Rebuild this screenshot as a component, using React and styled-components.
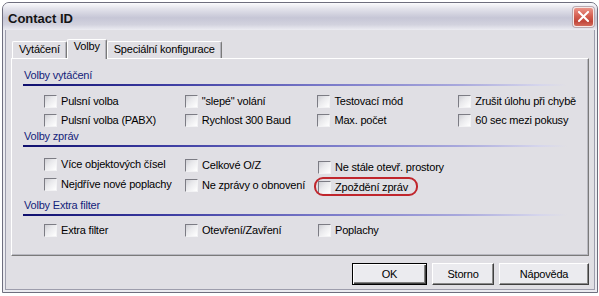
import styled, { createGlobalStyle } from "styled-components";

const GlobalStyle = createGlobalStyle`
  html, body {
    margin: 0;
    padding: 0;
    background: #ffffff;
  }
  body {
    font-family: "Liberation Sans", Arial, sans-serif;
    font-size: 11px;
    letter-spacing: -0.2px;
    color: #000;
  }
`;

const Window = styled.div`
  margin: 2px 0 0 2px;
  width: 596px;
  box-sizing: border-box;
  border: 1px solid #6e6e7e;
  border-radius: 7px 7px 0 0;
  overflow: hidden;
  background: #e0dfe4;
`;

const TitleBar = styled.div`
  height: 27px;
  display: flex;
  align-items: center;
  justify-content: space-between;
  padding: 0 3px 0 5px;
  background: linear-gradient(#fbfbfd 0%, #e4e4ec 20%, #c6c6d6 55%, #d2d2de 80%, #ececf2 100%);
`;

const Title = styled.div`
  font-family: "Liberation Sans", Arial, sans-serif;
  font-weight: bold;
  font-size: 13px;
  letter-spacing: 0;
  color: #141414;
  padding-top: 3px;
`;

const CloseButton = styled.div`
  width: 21px;
  height: 20px;
  box-sizing: border-box;
  border: 1px solid #f6e8e6;
  border-radius: 3px;
  background: linear-gradient(#eb9489 0%, #d45e50 45%, #c1463a 75%, #d36a5c 100%);
  box-shadow: 0 0 0 1px #b8a8b0;
  display: flex;
  align-items: center;
  justify-content: center;
`;

const Body = styled.div`
  border: 2px solid #ebebf0;
  border-top: none;
`;

const Content = styled.div`
  border: 1px solid #9d9dac;
  border-top: none;
  padding: 9px 5px 4px 5px;
`;

const TabStrip = styled.div`
  position: relative;
  z-index: 1;
  display: flex;
  align-items: flex-end;
  height: 19px;
  padding-left: 1px;
`;

const Tab = styled.div`
  box-sizing: border-box;
  height: ${(p) => (p.$active ? "20px" : "17px")};
  margin-bottom: ${(p) => (p.$active ? "-1px" : "0")};
  padding: ${(p) => (p.$active ? "0 6px" : "1px 6px 0 6px")};
  line-height: 13px;
  background: #e0dfe4;
  border-top: 1px solid #ffffff;
  border-left: 1px solid #ffffff;
  border-right: 1px solid #7a7a7a;
  border-radius: 2px 2px 0 0;
  box-shadow: inset -1px 0 0 #b4b4bc;
  white-space: nowrap;
`;

const Panel = styled.div`
  height: 198px;
  box-sizing: border-box;
  padding-top: 10px;
  border-top: 1px solid #ffffff;
  border-left: 1px solid #ffffff;
  border-right: 1px solid #7a7a7a;
  border-bottom: 1px solid #7a7a7a;
  box-shadow: inset -1px -1px 0 #b8b8c0;
`;

const Section = styled.div`
  margin-top: ${(p) => p.$mt || 0}px;
`;

const Header = styled.div`
  padding-left: 12px;
  line-height: 13px;
  color: #14237a;
`;

const Rule = styled.div`
  margin: 2px 0 0 11px;
  width: 544px;
  height: 2px;
  background: linear-gradient(
    to right,
    #10106e 0%,
    #3a3aa0 25%,
    #7878c8 55%,
    #a8a8dc 80%,
    #d6d6ec 95%,
    rgba(224, 223, 228, 0) 100%
  );
`;

const Columns = styled.div`
  display: flex;
  padding-left: 32px;
  margin-top: ${(p) => p.$mt}px;
`;

const Column = styled.div`
  display: flex;
  flex-direction: column;
  width: ${(p) => p.$w}px;
  padding-top: ${(p) => p.$pt || 0}px;
`;

const Option = styled.label`
  position: relative;
  height: ${(p) => p.$h}px;
  display: flex;
  align-items: center;
  gap: 4px;
  white-space: nowrap;
  line-height: 13px;
`;

const Box = styled.span`
  flex: none;
  width: 13px;
  height: 13px;
  box-sizing: border-box;
  border-top: 1px solid #7c7c84;
  border-left: 1px solid #7c7c84;
  border-right: 1px solid #f2f2f4;
  border-bottom: 1px solid #f2f2f4;
  background: linear-gradient(135deg, #cfcfd4 0%, #e9e9ec 40%, #ffffff 100%);
`;

const Highlight = styled.span`
  position: absolute;
  left: -4px;
  top: 0;
  width: 104px;
  height: 19px;
  box-sizing: border-box;
  border: 2px solid #c0262d;
  border-radius: 9px;
  pointer-events: none;
`;

const ButtonRow = styled.div`
  display: flex;
  justify-content: flex-end;
  gap: 5px;
  margin-top: 7px;
`;

const Button = styled.div`
  width: ${(p) => p.$w}px;
  height: 22px;
  box-sizing: border-box;
  display: flex;
  align-items: center;
  justify-content: center;
  background: #ebebef;
  border: 1px solid;
  border-color: ${(p) => (p.$default ? "#000 #000 #000 #000" : "#ffffff #404040 #404040 #ffffff")};
  box-shadow: ${(p) =>
    p.$default
      ? "inset 1px 1px 0 #ffffff, inset -1px -1px 0 #404040, inset -2px -2px 0 #808080"
      : "inset -1px -1px 0 #8a8a8a"};
`;

const sections = [
  {
    title: "Volby vytáčení",
    mt: 0,
    colsMt: 6,
    rowH: 19,
    columns: [
      { w: 141, items: ["Pulsní volba", "Pulsní volba (PABX)"] },
      { w: 133, items: ["\"slepé\" volání", "Rychlost 300 Baud"] },
      { w: 141, items: ["Testovací mód", "Max. počet"] },
      { w: 130, items: ["Zrušit úlohu při chybě", "60 sec mezi pokusy"] },
    ],
  },
  {
    title: "Volby zpráv",
    mt: 0,
    colsMt: 7,
    rowH: 20,
    columns: [
      { w: 141, items: ["Více objektových čísel", "Nejdříve nové poplachy"] },
      { w: 133, pt: 1, items: ["Celkové O/Z", "Ne zprávy o obnovení"] },
      { w: 141, pt: 3, items: ["Ne stále otevř. prostory", "Zpoždění zpráv"], mark: 1 },
    ],
  },
  {
    title: "Volby Extra filter",
    mt: 2,
    colsMt: 5,
    rowH: 19,
    columns: [
      { w: 141, items: ["Extra filter"] },
      { w: 133, items: ["Otevření/Zavření"] },
      { w: 141, items: ["Poplachy"] },
    ],
  },
];

export default function App() {
  return (
    <>
      <GlobalStyle />
      <Window>
        <TitleBar>
          <Title>Contact ID</Title>
          <CloseButton>
            <svg width="11" height="11" viewBox="0 0 11 11">
              <path d="M1 1 L10 10 M10 1 L1 10" stroke="#ffffff" strokeWidth="2" strokeLinecap="square" />
            </svg>
          </CloseButton>
        </TitleBar>
        <Body>
          <Content>
            <TabStrip>
              <Tab>Vytáčení</Tab>
              <Tab $active>Volby</Tab>
              <Tab>Speciální konfigurace</Tab>
            </TabStrip>
            <Panel>
              {sections.map((s) => (
                <Section key={s.title} $mt={s.mt}>
                  <Header>{s.title}</Header>
                  <Rule />
                  <Columns $mt={s.colsMt}>
                    {s.columns.map((c, ci) => (
                      <Column key={ci} $w={c.w} $pt={c.pt}>
                        {c.items.map((label, i) => (
                          <Option key={label} $h={s.rowH}>
                            <Box />
                            {label}
                            {c.mark === i && <Highlight />}
                          </Option>
                        ))}
                      </Column>
                    ))}
                  </Columns>
                </Section>
              ))}
            </Panel>
            <ButtonRow>
              <Button $w={75} $default>OK</Button>
              <Button $w={62}>Storno</Button>
              <Button $w={90}>Nápověda</Button>
            </ButtonRow>
          </Content>
        </Body>
      </Window>
    </>
  );
}
